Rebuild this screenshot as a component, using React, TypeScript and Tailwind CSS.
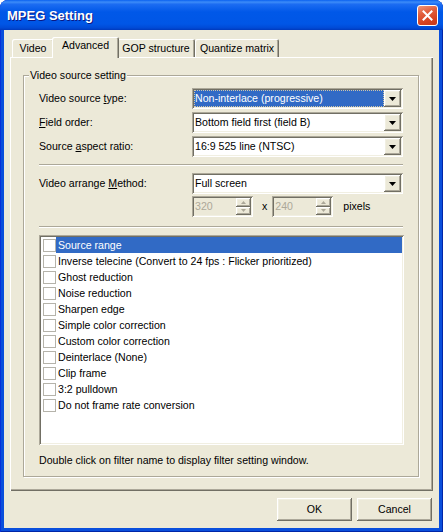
import React from "react";

const sunken =
  "shadow-[inset_1px_1px_0_#ACA899,inset_-1px_-1px_0_#FFFFFF,inset_2px_2px_0_#716F64,inset_-2px_-2px_0_#F1EFE2]";
const raised =
  "shadow-[inset_-1px_-1px_0_#716F64,inset_1px_1px_0_#FFFFFF,inset_-2px_-2px_0_#ACA899,inset_2px_2px_0_#F1EFE2]";

const filters = [
  "Source range",
  "Inverse telecine (Convert to 24 fps : Flicker prioritized)",
  "Ghost reduction",
  "Noise reduction",
  "Sharpen edge",
  "Simple color correction",
  "Custom color correction",
  "Deinterlace (None)",
  "Clip frame",
  "3:2 pulldown",
  "Do not frame rate conversion",
];

function DownArrow({ color = "#000000" }: { color?: string }) {
  return (
    <svg width="7" height="4" viewBox="0 0 7 4">
      <polygon points="0,0 7,0 3.5,4" fill={color} />
    </svg>
  );
}

function Combo({ value, selected }: { value: string; selected?: boolean }) {
  return (
    <div className={`flex h-[21px] w-[211px] bg-white p-[2px] ${sunken}`}>
      <div className="flex flex-1 items-stretch">
        {selected ? (
          <span className="flex flex-1 items-center bg-[#316AC5] pl-[1px] text-white outline-1 outline-dotted outline-offset-[-1px] outline-[#CEC5A8]">
            {value}
          </span>
        ) : (
          <span className="flex flex-1 items-center pl-[1px]">{value}</span>
        )}
      </div>
      <div className={`flex w-[17px] items-center justify-center bg-[#ECE9D8] ${raised}`}>
        <DownArrow />
      </div>
    </div>
  );
}

function Spin({ value }: { value: string }) {
  return (
    <div className={`flex h-[21px] w-[61px] bg-[#ECE9D8] p-[2px] ${sunken}`}>
      <span className="flex flex-1 items-center pl-[1px] text-[#ACA899]">{value}</span>
      <div className="flex w-[15px] flex-col">
        <div className={`flex flex-1 items-center justify-center ${raised}`}>
          <svg width="5" height="3" viewBox="0 0 5 3">
            <polygon points="0,3 5,3 2.5,0" fill="#ACA899" />
          </svg>
        </div>
        <div className={`flex flex-1 items-center justify-center ${raised}`}>
          <svg width="5" height="3" viewBox="0 0 5 3">
            <polygon points="0,0 5,0 2.5,3" fill="#ACA899" />
          </svg>
        </div>
      </div>
    </div>
  );
}

function Row({ label, children }: { label: React.ReactNode; children: React.ReactNode }) {
  return (
    <div className="flex items-center">
      <div className="w-[153px]">{label}</div>
      {children}
    </div>
  );
}

function Separator() {
  return <div className="h-[2px] border-t border-[#ACA899] border-b border-b-white" />;
}

function Tab({ label, width, selected }: { label: string; width: string; selected?: boolean }) {
  if (selected) {
    return (
      <div
        className={`relative z-10 -mx-[2px] -mb-[1px] flex h-[21px] items-start justify-center rounded-t-[2px] bg-[#ECE9D8] pt-[2px] ${width} shadow-[inset_1px_1px_0_#FFFFFF,inset_-1px_0_0_#716F64,inset_-2px_0_0_#ACA899]`}
      >
        {label}
      </div>
    );
  }
  return (
    <div
      className={`flex h-[18px] items-center justify-center rounded-t-[2px] bg-[#ECE9D8] ${width} shadow-[inset_1px_1px_0_#FFFFFF,inset_-1px_0_0_#716F64,inset_-2px_0_0_#ACA899]`}
    >
      {label}
    </div>
  );
}

export default function App() {
  return (
    <div
      className="flex h-[532px] w-[443px] flex-col overflow-hidden rounded-t-[8px] bg-[#0A4FDC] text-[10.6px] leading-[13px] text-black shadow-[inset_1px_0_0_#0831D9,inset_-1px_0_0_#0026A8,inset_0_-1px_0_#0026A8]"
      style={{ fontFamily: '"Liberation Sans", Arial, sans-serif' }}
    >
      {/* Title bar */}
      <div className="flex h-[30px] shrink-0 items-center justify-between bg-[linear-gradient(180deg,#0A61F0_0%,#3D8CF8_7%,#1C6CF2_14%,#0058E8_40%,#0056E6_80%,#004AD6_93%,#0039BC_100%)] pl-[7px] pr-[5px]">
        <span className="text-[13px] font-bold text-white [text-shadow:1px_1px_0_#0A1883]">MPEG Setting</span>
        <div className="flex h-[21px] w-[21px] items-center justify-center rounded-[3px] border border-white bg-[linear-gradient(160deg,#F0977A_0%,#E2603E_35%,#D5401E_75%,#C83A1C_100%)]">
          <svg width="11" height="11" viewBox="0 0 11 11">
            <path d="M1.5 1.5 L9.5 9.5 M9.5 1.5 L1.5 9.5" stroke="#FFFFFF" strokeWidth="2" strokeLinecap="square" />
          </svg>
        </div>
      </div>

      {/* Body */}
      <div className="mx-[4px] mb-[4px] flex flex-1 flex-col bg-[#ECE9D8] pt-[7px]">
        {/* Tabs */}
        <div className="flex h-[20px] items-end pl-[8px]">
          <Tab label="Video" width="w-[42px]" />
          <Tab label="Advanced" width="w-[67px]" selected />
          <Tab label="GOP structure" width="w-[78px]" />
          <Tab label="Quantize matrix" width="w-[84px]" />
        </div>

        {/* Tab panel */}
        <div className="ml-[6px] h-[434px] w-[423px] pl-[13px] pr-[14px] pt-[18px] shadow-[inset_1px_1px_0_#FFFFFF,inset_-1px_-1px_0_#716F64,inset_-2px_-2px_0_#ACA899]">
          {/* Group box */}
          <div className="relative flex h-[402px] flex-col border border-[#ACA899] px-[15px] pt-[12px] shadow-[inset_1px_1px_0_#FFFFFF,1px_1px_0_#FFFFFF]">
            <span className="absolute -top-[7px] left-[5px] bg-[#ECE9D8] px-[1px]">Video source setting</span>

            <div className="flex flex-col gap-[3px]">
              <Row label={<>Video source <u>t</u>ype:</>}>
                <Combo value="Non-interlace (progressive)" selected />
              </Row>
              <Row label={<><u>F</u>ield order:</>}>
                <Combo value="Bottom field first (field B)" />
              </Row>
              <Row label={<>Source <u>a</u>spect ratio:</>}>
                <Combo value="16:9 525 line (NTSC)" />
              </Row>
            </div>

            <div className="mt-[7px]">
              <Separator />
            </div>

            <div className="mt-[7px]">
              <Row label={<>Video arrange <u>M</u>ethod:</>}>
                <Combo value="Full screen" />
              </Row>
            </div>

            <div className="mt-[2px] flex items-center pl-[153px]">
              <Spin value="320" />
              <span className="ml-[9px] mr-[5px]">x</span>
              <Spin value="240" />
              <span className="ml-[10px]">pixels</span>
            </div>

            <div className="mt-[9px]">
              <Separator />
            </div>

            {/* Filter list */}
            <div className={`mt-[7px] h-[210px] w-[365px] bg-white p-[2px] ${sunken}`}>
              {filters.map((f, i) => (
                <div key={f} className="flex h-[16px] items-center">
                  <span className="ml-[2px] h-[13px] w-[13px] shrink-0 border border-[#B5B3AA] bg-white" />
                  <span
                    className={
                      i === 0
                        ? "flex h-full flex-1 items-center bg-[#316AC5] pl-[2px] text-white"
                        : "flex h-full flex-1 items-center pl-[2px]"
                    }
                  >
                    {f}
                  </span>
                </div>
              ))}
            </div>

            <p className="mt-[9px]">Double click on filter name to display filter setting window.</p>
          </div>
        </div>

        {/* Buttons */}
        <div className="mt-[7px] flex justify-end gap-[5px] pr-[7px]">
          <button className={`h-[23px] w-[75px] bg-[#ECE9D8] ${raised}`}>OK</button>
          <button className={`h-[23px] w-[75px] bg-[#ECE9D8] ${raised}`}>Cancel</button>
        </div>
      </div>
    </div>
  );
}
